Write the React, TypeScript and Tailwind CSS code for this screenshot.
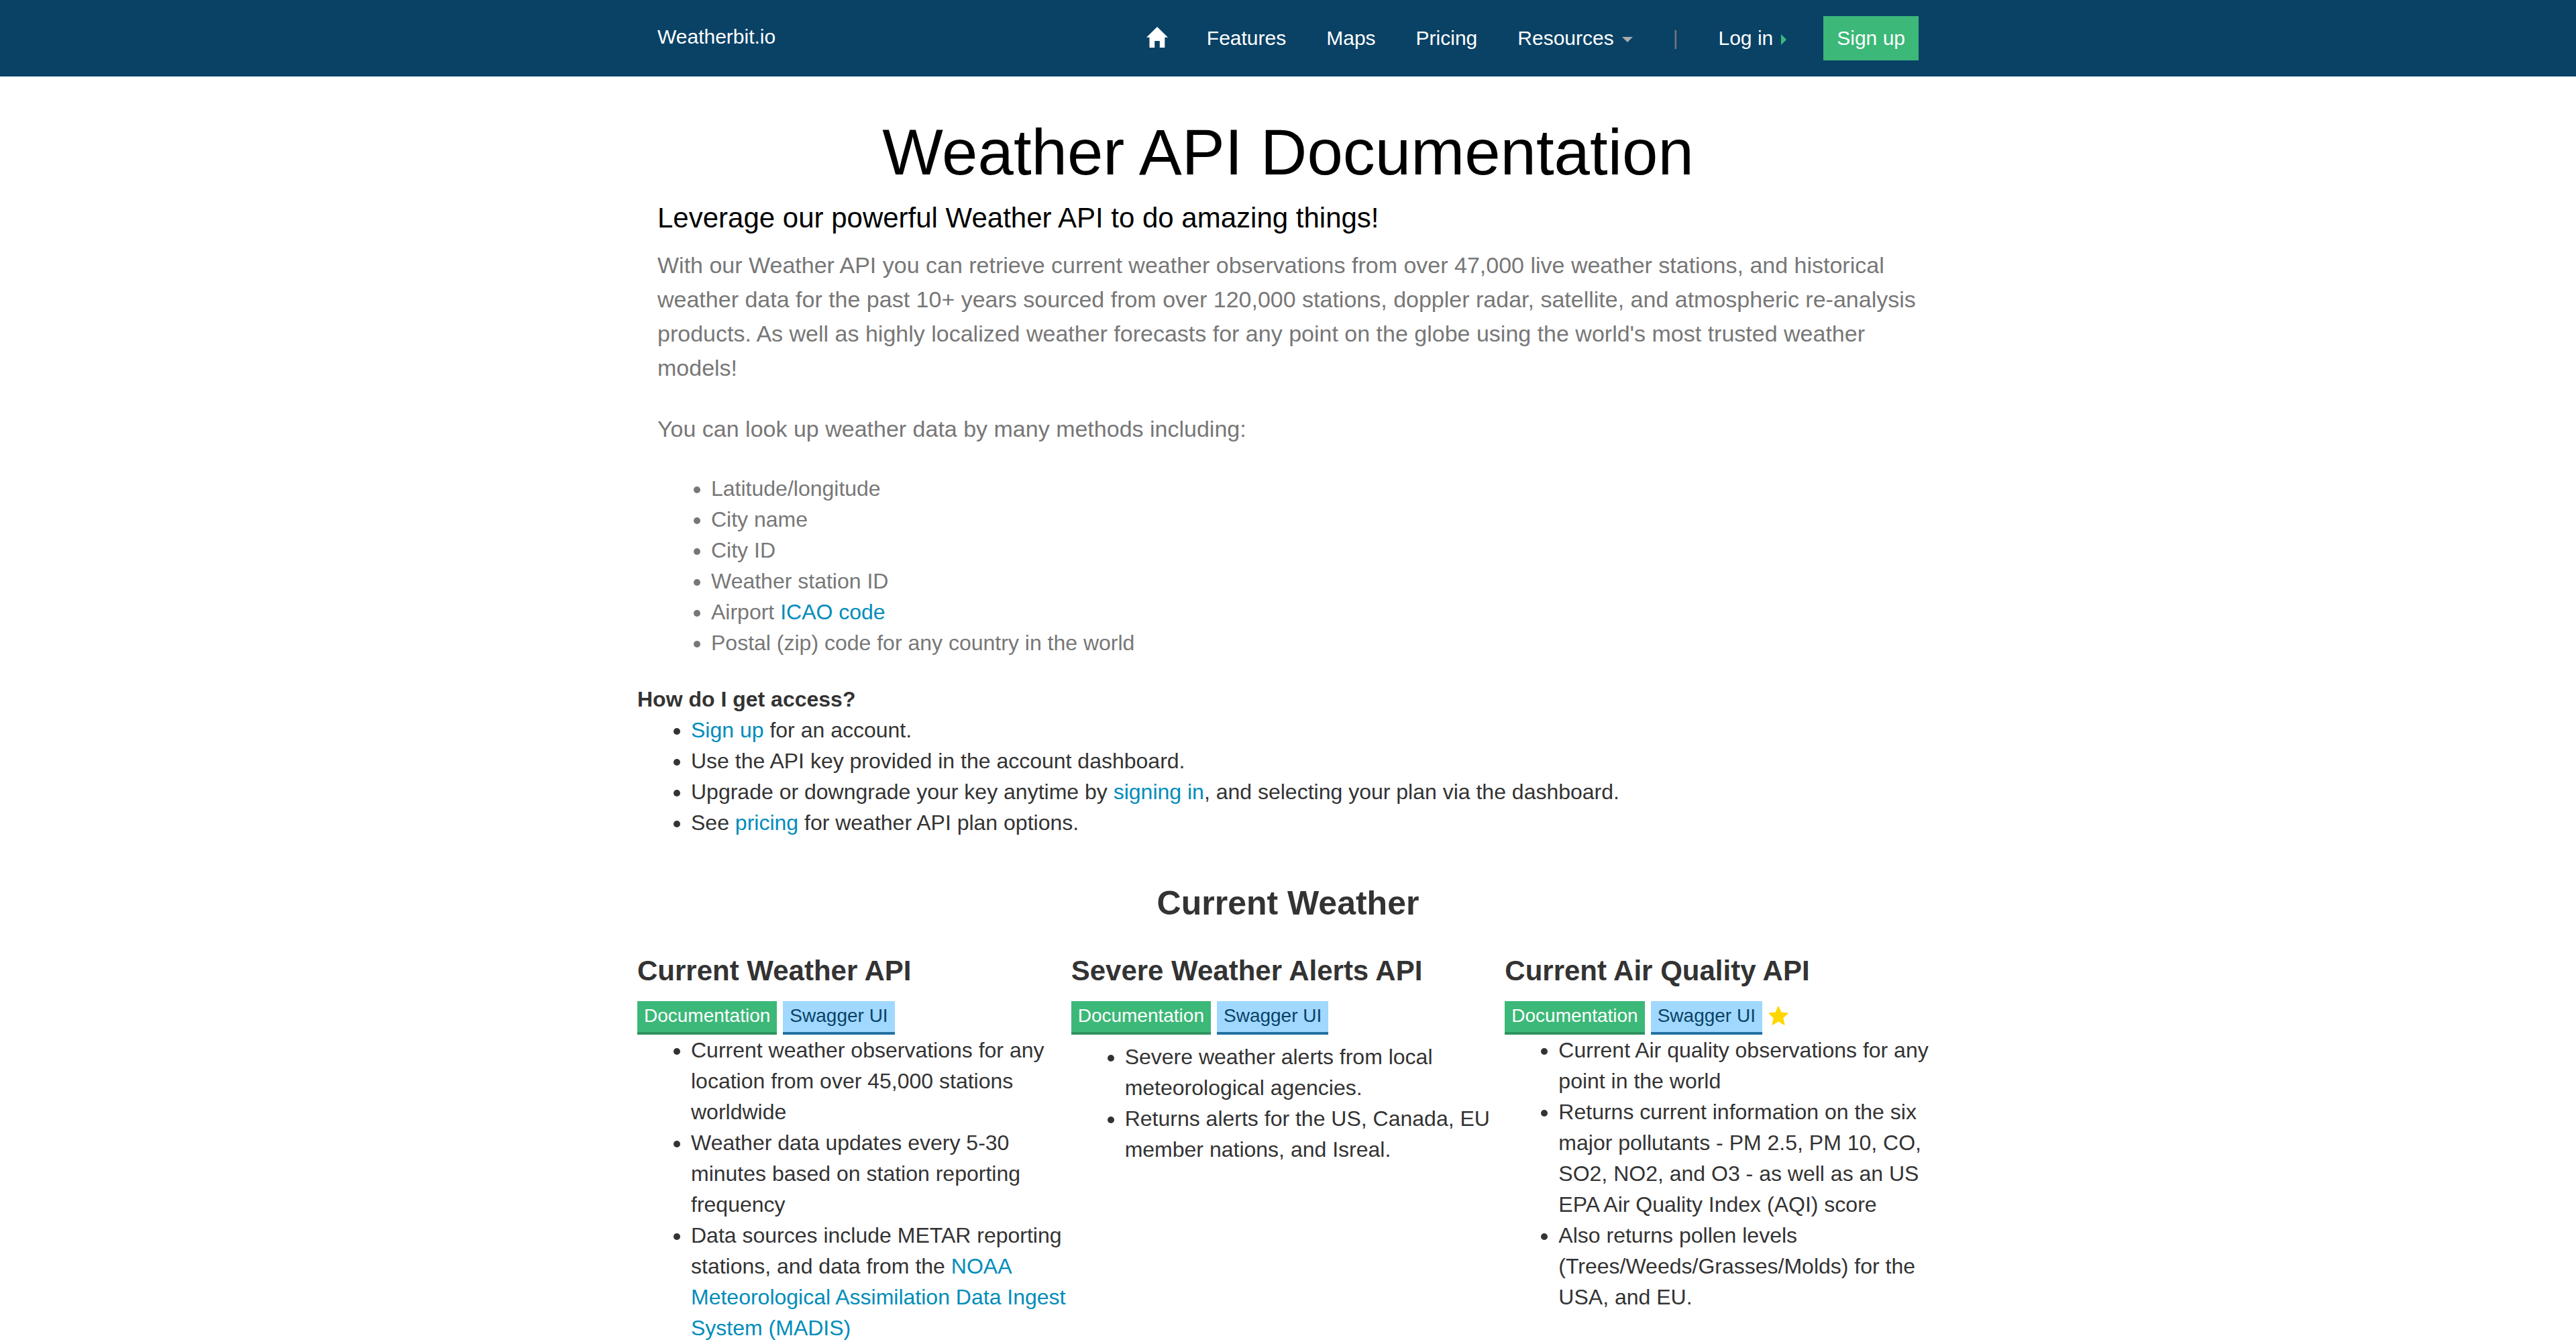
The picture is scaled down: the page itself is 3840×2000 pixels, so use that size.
import type { ReactNode } from "react";

function HomeIcon() {
  return (
    <svg viewBox="0 0 32 31" className="h-[31px] w-8" fill="currentColor" aria-hidden="true">
      <path d="M16 0 32 15.7H27.3V31H19.8V21H12.2V31H4.5V15.7H0Z" />
    </svg>
  );
}

function StarIcon() {
  return (
    <svg
      viewBox="0 0 30 30"
      className="ml-[9px] h-[30px] w-[30px] text-[#ffd700]"
      fill="currentColor"
      stroke="currentColor"
      strokeWidth="1.6"
      strokeLinejoin="round"
      role="img"
      aria-label="Featured"
    >
      <path d="M15 1.2 18.9 10.4 28.8 11.2 21.4 17.8 23.7 27.8 15 22.6 6.3 27.8 8.6 17.8 1.2 11.2 11.1 10.4Z" />
    </svg>
  );
}

function Link({ children }: { children: ReactNode }) {
  return (
    <a href="#" className="text-[#008cba]">
      {children}
    </a>
  );
}

function NavBar() {
  return (
    <header className="bg-[#0a4266] text-[30px] leading-[34px] text-white">
      <div className="mx-auto flex h-[114px] w-full max-w-[1940px] items-center justify-between px-[30px]">
        <a href="#" className="pb-1">
          Weatherbit.io
        </a>
        <nav className="flex items-center">
          <a href="#" aria-label="Home" className="mr-[58px] pb-1">
            <HomeIcon />
          </a>
          <div className="flex items-center gap-[60px]">
            <a href="#">Features</a>
            <a href="#">Maps</a>
            <a href="#">Pricing</a>
            <button type="button" className="flex items-center gap-3">
              Resources
              <svg viewBox="0 0 16 8" className="mt-1 h-2 w-4" fill="#aaaaaa" aria-hidden="true">
                <path d="M0 0H16L8 8Z" />
              </svg>
            </button>
            <span className="text-[#777777]">|</span>
            <a href="#" className="flex items-center gap-3">
              Log in
              <svg viewBox="0 0 8 16" className="mt-1 h-4 w-2" fill="#3cb878" aria-hidden="true">
                <path d="M0 0 8 8 0 16Z" />
              </svg>
            </a>
          </div>
          <a href="#" className="ml-[55px] bg-[#3cb878] px-5 py-4">
            Sign up
          </a>
        </nav>
      </div>
    </header>
  );
}

type Api = {
  title: string;
  starred?: boolean;
  spaced?: boolean;
  points: ReactNode[];
};

const apis: Api[] = [
  {
    title: "Current Weather API",
    points: [
      "Current weather observations for any location from over 45,000 stations worldwide",
      "Weather data updates every 5-30 minutes based on station reporting frequency",
      <>
        Data sources include METAR reporting stations, and data from the{" "}
        <Link>NOAA Meteorological Assimilation Data Ingest System (MADIS)</Link>
      </>,
    ],
  },
  {
    title: "Severe Weather Alerts API",
    spaced: true,
    points: [
      "Severe weather alerts from local meteorological agencies.",
      "Returns alerts for the US, Canada, EU member nations, and Isreal.",
    ],
  },
  {
    title: "Current Air Quality API",
    starred: true,
    points: [
      "Current Air quality observations for any point in the world",
      "Returns current information on the six major pollutants - PM 2.5, PM 10, CO, SO2, NO2, and O3 - as well as an US EPA Air Quality Index (AQI) score",
      "Also returns pollen levels (Trees/Weeds/Grasses/Molds) for the USA, and EU.",
    ],
  },
];

function ApiCard({ api }: { api: Api }) {
  return (
    <article>
      <h3 className="text-[42px] leading-[46px] font-bold">{api.title}</h3>
      <div className="mt-[22px] flex items-start text-[28px] leading-[44px]">
        <a href="#" className="border-b-4 border-[#2f9460] bg-[#3cb878] px-[10px] pb-[2px] text-white">
          Documentation
        </a>
        <a href="#" className="ml-[9px] border-b-4 border-[#2272a3] bg-[#a0d8ff] px-[10px] pb-[2px] text-[#0a4266]">
          Swagger UI
        </a>
        {api.starred && (
          <span className="pt-[7px]">
            <StarIcon />
          </span>
        )}
      </div>
      <ul className={api.spaced ? "mt-[10px] list-disc pl-20" : "list-disc pl-20"}>
        {api.points.map((point, i) => (
          <li key={i}>{point}</li>
        ))}
      </ul>
    </article>
  );
}

export default function App() {
  return (
    <div className="min-h-screen bg-white font-['Liberation_Sans',Arial,sans-serif] text-[32px] leading-[46px] text-[#333333]">
      <NavBar />
      <main className="mx-auto w-full max-w-[1940px] pt-[60px]">
        <section className="px-[30px] text-[#777777]">
          <h1 className="text-center text-[96px] leading-[106px] text-black">Weather API Documentation</h1>
          <p className="mt-[22px] text-[42px] leading-[46px] text-black">
            Leverage our powerful Weather API to do amazing things!
          </p>
          <p className="mt-[22px] text-[34px] leading-[51px]">
            With our Weather API you can retrieve current weather observations from over 47,000 live weather
            stations, and historical weather data for the past 10+ years sourced from over 120,000 stations,
            doppler radar, satellite, and atmospheric re-analysis products. As well as highly localized weather
            forecasts for any point on the globe using the world's most trusted weather models!
          </p>
          <p className="mt-10 text-[34px] leading-[51px]">
            You can look up weather data by many methods including:
          </p>
          <ul className="mt-10 list-disc pl-20">
            <li>Latitude/longitude</li>
            <li>City name</li>
            <li>City ID</li>
            <li>Weather station ID</li>
            <li>
              Airport <Link>ICAO code</Link>
            </li>
            <li>Postal (zip) code for any country in the world</li>
          </ul>
        </section>

        <section className="mt-[38px]">
          <h2 className="font-bold">How do I get access?</h2>
          <ul className="list-disc pl-20">
            <li>
              <Link>Sign up</Link> for an account.
            </li>
            <li>Use the API key provided in the account dashboard.</li>
            <li>
              Upgrade or downgrade your key anytime by <Link>signing in</Link>, and selecting your plan via the
              dashboard.
            </li>
            <li>
              See <Link>pricing</Link> for weather API plan options.
            </li>
          </ul>
        </section>

        <section className="mt-[69px]">
          <h2 className="text-center text-[50px] leading-[56px] font-bold">Current Weather</h2>
          <div className="mt-[50px] grid grid-cols-3">
            {apis.map((api) => (
              <ApiCard key={api.title} api={api} />
            ))}
          </div>
        </section>
      </main>
    </div>
  );
}
